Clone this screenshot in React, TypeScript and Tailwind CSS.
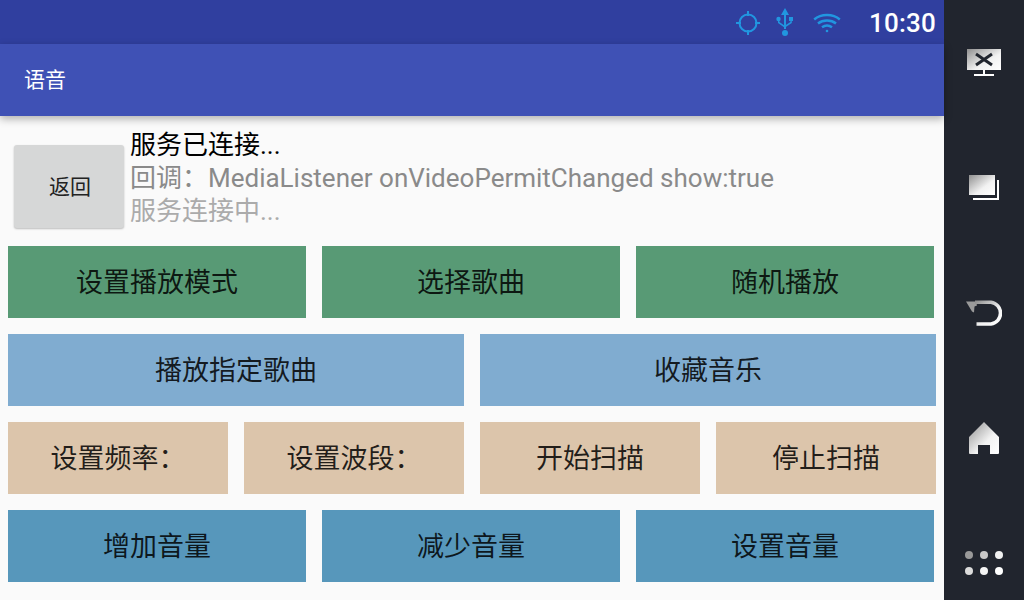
const font = '[font-family:Roboto,"Noto_Sans_CJK_SC",sans-serif]';

function Btn({ label, bg, w }: { label: string; bg: string; w: string }) {
  return (
    <div className={`${bg} ${w} h-[72px] pt-[2px] shrink-0 flex items-center justify-center text-[27px] text-[rgba(0,0,0,0.85)]`}>
      {label}
    </div>
  );
}

function Location() {
  return (
    <svg width="24" height="24" viewBox="0 0 24 24" fill="none" stroke="#2196e0" strokeWidth="2">
      <circle cx="12" cy="12" r="8.5" />
      <path d="M12 0v5M12 19v5M0 12h5M19 12h5" />
    </svg>
  );
}

function Usb() {
  return (
    <svg width="18" height="28" viewBox="0 0 18 28" fill="#2196e0">
      <path d="M9 0l4 7h-3v14H8V7H5z" />
      <circle cx="9" cy="25" r="3" />
      <circle cx="2.5" cy="11" r="2.2" />
      <rect x="13" y="9" width="4" height="4" />
      <path d="M2 11h1.4v3l5 3.5v2l-6.4-4.5zM14.4 12h1.4v3l-6 4v-2l4.6-3z" />
    </svg>
  );
}

function Wifi() {
  return (
    <svg width="28" height="20" viewBox="0 0 28 20" fill="none" stroke="#2196e0" strokeWidth="2.4">
      <path d="M1.2 6.5C8 .5 20 .5 26.8 6.5" />
      <path d="M5 10.5c5-4 13-4 18 0" />
      <path d="M9 14.3c3-2.2 7-2.2 10 0" />
      <circle cx="14" cy="18" r="1.3" fill="#2196e0" stroke="none" />
    </svg>
  );
}

function NavIcon({ children, w, h, className }: { children: React.ReactNode; w: number; h: number; className: string }) {
  return (
    <svg className={className} width={w} height={h} viewBox={`0 0 ${w} ${h}`}>
      <defs>
        <linearGradient id="navg" x1="0" y1="0" x2="1" y2="1">
          <stop offset="0" stopColor="#8f8f8f" />
          <stop offset="0.6" stopColor="#f2f2f2" />
          <stop offset="1" stopColor="#ffffff" />
        </linearGradient>
      </defs>
      {children}
    </svg>
  );
}

export default function App() {
  return (
    <div className={`w-[1024px] h-[600px] flex overflow-hidden bg-[#fafafa] ${font}`}>
      <div className="w-[944px] h-full flex flex-col">
        <div className="h-[44px] bg-[#303f9f] flex items-center justify-end pr-[8px] pt-[1px] shrink-0">
          <Location />
          <div className="ml-[16px] mb-[1px]"><Usb /></div>
          <div className="ml-[19px]"><Wifi /></div>
          <span className="ml-[28px] pt-[1px] text-[26px] text-white [font-family:Roboto,sans-serif] font-medium tracking-[0.2px]">10:30</span>
        </div>
        <div className="h-[72px] bg-[#3f51b5] flex items-center pl-[24px] pt-[2px] text-[21px] text-white shrink-0 shadow-[0_3px_8px_rgba(0,0,0,0.3)] z-10">
          语音
        </div>
        <div className="flex items-start h-[130px] shrink-0 pl-[14px]">
          <div className="w-[110px] h-[83px] mt-[29px] pt-[2px] pl-[2px] bg-[#d6d7d7] rounded-[3px] shadow-[0_1px_2px_rgba(0,0,0,0.25)] flex items-center justify-center text-[21px] text-[#222] shrink-0">
            返回
          </div>
          <div className="ml-[6px] mt-[13px] flex flex-col text-[26px] leading-[33px]">
            <span className="text-black">服务已连接...</span>
            <span className="text-[#8a8a8a] whitespace-nowrap">回调：MediaListener onVideoPermitChanged show:true</span>
            <span className="text-[#ababab]">服务连接中...</span>
          </div>
        </div>
        <div className="flex flex-col gap-[16px] pl-[8px]">
          <div className="flex gap-[16px]">
            <Btn label="设置播放模式" bg="bg-[#589a75]" w="w-[298px]" />
            <Btn label="选择歌曲" bg="bg-[#589a75]" w="w-[298px]" />
            <Btn label="随机播放" bg="bg-[#589a75]" w="w-[298px]" />
          </div>
          <div className="flex gap-[16px]">
            <Btn label="播放指定歌曲" bg="bg-[#80acd0]" w="w-[456px]" />
            <Btn label="收藏音乐" bg="bg-[#80acd0]" w="w-[456px]" />
          </div>
          <div className="flex gap-[16px]">
            <Btn label="设置频率：" bg="bg-[#dcc5ab]" w="w-[220px]" />
            <Btn label="设置波段：" bg="bg-[#dcc5ab]" w="w-[220px]" />
            <Btn label="开始扫描" bg="bg-[#dcc5ab]" w="w-[220px]" />
            <Btn label="停止扫描" bg="bg-[#dcc5ab]" w="w-[220px]" />
          </div>
          <div className="flex gap-[16px]">
            <Btn label="增加音量" bg="bg-[#5797bb]" w="w-[298px]" />
            <Btn label="减少音量" bg="bg-[#5797bb]" w="w-[298px]" />
            <Btn label="设置音量" bg="bg-[#5797bb]" w="w-[298px]" />
          </div>
        </div>
      </div>
      <div className="w-[80px] h-full bg-[#21252e] flex flex-col items-center pt-[49px] shrink-0">
        <NavIcon className="shrink-0" w={34} h={27}>
          <rect x="0" y="0" width="34" height="21" fill="url(#navg)" />
          <path d="M9 5l16 11M25 5L9 16" stroke="#21252e" strokeWidth="3" />
          <rect x="16" y="21" width="2" height="4" fill="#fff" />
          <rect x="7" y="25" width="20" height="2" fill="#fff" />
        </NavIcon>
        <NavIcon className="shrink-0 mt-[99px]" w={31} h={25}>
          <rect x="0" y="0" width="26" height="20" fill="url(#navg)" />
          <path d="M29 5v19H4" fill="none" stroke="#fff" strokeWidth="2" />
        </NavIcon>
        <NavIcon className="shrink-0 mt-[100px]" w={36} h={26}>
          <path d="M0 1.5h10l1 4-2.5 1-.5 6-2-1z" fill="#9a9a9a" />
          <path d="M9 2.2h16a11 11 0 0 1 0 21.8H10.5" fill="none" stroke="url(#navg)" strokeWidth="3.6" />
        </NavIcon>
        <NavIcon className="shrink-0 mt-[96px]" w={30} h={32}>
          <path d="M15 0l15 15v16a1 1 0 0 1-1 1h-8V23h-12v9H1a1 1 0 0 1-1-1V15z" fill="url(#navg)" />
        </NavIcon>
        <NavIcon className="shrink-0 mt-[97px]" w={38} h={24}>
          <circle cx="4" cy="4" r="4" fill="#999" />
          <circle cx="19" cy="4" r="4" fill="#c8c8c8" />
          <circle cx="34" cy="4" r="4" fill="#f0f0f0" />
          <circle cx="4" cy="20" r="4" fill="#dcdcdc" />
          <circle cx="19" cy="20" r="4" fill="#f5f5f5" />
          <circle cx="34" cy="20" r="4" fill="#fff" />
        </NavIcon>
      </div>
    </div>
  );
}
